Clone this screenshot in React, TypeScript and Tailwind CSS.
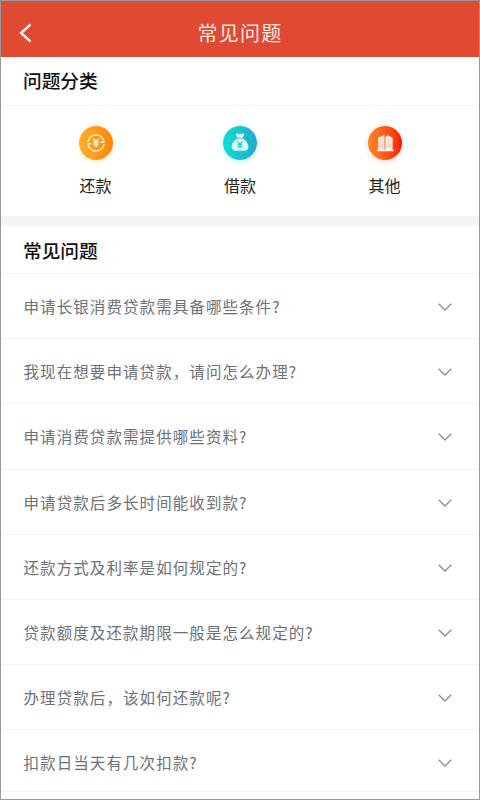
import type { ReactNode } from "react"

const questions = [
    "申请长银消费贷款需具备哪些条件?",
    "我现在想要申请贷款，请问怎么办理?",
    "申请消费贷款需提供哪些资料?",
    "申请贷款后多长时间能收到款?",
    "还款方式及利率是如何规定的?",
    "贷款额度及还款期限一般是怎么规定的?",
    "办理贷款后，该如何还款呢?",
    "扣款日当天有几次扣款?",
]

function RepayIcon() {
    return (
        <svg viewBox="0 0 34 34" className="size-[34px]" fill="none" stroke="#fff0cf">
            <path d="M9 16a8.100 8.100 0 0 1 15.800-1.200v1.400h-3.400M25 18a8.100 8.100 0 0 1-15.800 1.200v-1.400h3.400" strokeWidth="1.500" />
            <path d="M14.400 12.800l2.600 3.200 2.600-3.200M17 16v5M14.400 16.400h5.200M14.400 18.500h5.200" strokeWidth="1.600" />
        </svg>
    )
}

function BorrowIcon() {
    return (
        <svg viewBox="0 0 34 34" className="size-[34px]">
            <path d="M12.600 8.200q2.200-1.300 4.400 0 2.200-1.300 4.400 0l-1.700 3.600h-5.400z" fill="#d9fafa" />
            <path d="M14 12.500h6c2.800 1.800 5.400 5.200 5.400 8.500 0 2.500-1.700 3.800-4 3.800h-8.800c-2.300 0-4-1.300-4-3.800 0-3.300 2.600-6.700 5.400-8.500z" fill="#d9fafa" />
            <path d="M14.500 15l2.500 3.200 2.500-3.200M17 18.200v4.300M14.500 18.300h5M14.500 20.300h5" fill="none" stroke="#18b9ca" strokeWidth="1" />
        </svg>
    )
}

function OtherIcon() {
    return (
        <svg viewBox="0 0 34 34" className="size-[34px]">
            <path d="M10.200 11.600l6.300-2.700v15.400h-6.300zM17.400 10.700l2.800-1.400 4.400 2.400v12.600h-7.200zM8.800 23.800h16.800v1.400H8.800z" fill="#fff0e8" />
            <path d="M12.600 13.500V23M14.700 12.500V23M20 13.500V23M22.200 13.500V23" stroke="#ff7448" strokeWidth=".55" strokeDasharray="1.400 .9" />
        </svg>
    )
}

function Category({ label, color, children }: { label: string; color: string; children: ReactNode }) {
    return (
        <div className="flex w-[144.500px] flex-col items-center">
            <div className={`size-[34px] rounded-full bg-linear-to-r ${color}`}>{children}</div>
            <span className="mt-[13px] text-[16px] leading-6 text-[#222]">{label}</span>
        </div>
    )
}

function SectionTitle({ size, children }: { size: string; children: ReactNode }) {
    return (
        <h2 className={`border-b border-[#f3f3f4] pl-[22px] text-[18.700px] font-medium text-[#111] ${size}`}>
            {children}
        </h2>
    )
}

function App() {
    return (
        <div lang="zh-CN" className="flex h-[800px] w-[480px] flex-col overflow-hidden border border-[#999] bg-white font-['Noto_Sans_CJK_SC',sans-serif]">
            <header className="grid h-[56px] shrink-0 grid-cols-[80px_1fr_80px] items-center bg-[#e04932] text-[#ffe9e4]">
                <svg viewBox="0 0 14 20" className="mt-[8px] ml-[17px] h-5 w-3.5" fill="none" stroke="#fff3ef" strokeWidth="2.400">
                    <path d="M12.500 1.500L3 10l9.500 8.500" />
                </svg>
                <h1 className="mt-[8px] text-center text-[20px] leading-7 tracking-[1.200px]">常见问题</h1>
            </header>

            <section className="shrink-0">
                <SectionTitle size="h-[49px] leading-[45px]">问题分类</SectionTitle>
                <div className="flex h-[110px] justify-center pt-[20px]">
                    <Category label="还款" color="from-[#ffb02a] to-[#ff8500] shadow-[0_2px_5px_#ffb04a40]"><RepayIcon /></Category>
                    <Category label="借款" color="from-[#0be0d6] to-[#22a9cd] shadow-[0_2px_5px_#28d6df40]"><BorrowIcon /></Category>
                    <Category label="其他" color="from-[#ff8528] to-[#ff0804] shadow-[0_2px_5px_#ff654040]"><OtherIcon /></Category>
                </div>
            </section>

            <div className="h-[10px] shrink-0 bg-[#f2f3f5]" />

            <section className="shrink-0">
                <SectionTitle size="h-[48px] leading-[47px]">常见问题</SectionTitle>
                <ul>
                    {questions.map((question) => (
                        <li key={question} className="flex h-[65.200px] items-center justify-between border-b border-[#f3f3f4] pr-[27px] pl-[22.500px] last:h-[62px] last:pt-[3px]">
                            <span className="text-[15.500px] leading-6 tracking-[1.080px] whitespace-nowrap text-[#6b7079]">{question}</span>
                            <svg viewBox="0 0 14 8" className="mt-[2px] h-2 w-3.5" fill="none" stroke="#8b8b8b" strokeWidth="1.300">
                                <path d="M.7.8L7 7l6.300-6.200" />
                            </svg>
                        </li>
                    ))}
                </ul>
            </section>
        </div>
    )
}

export default App
